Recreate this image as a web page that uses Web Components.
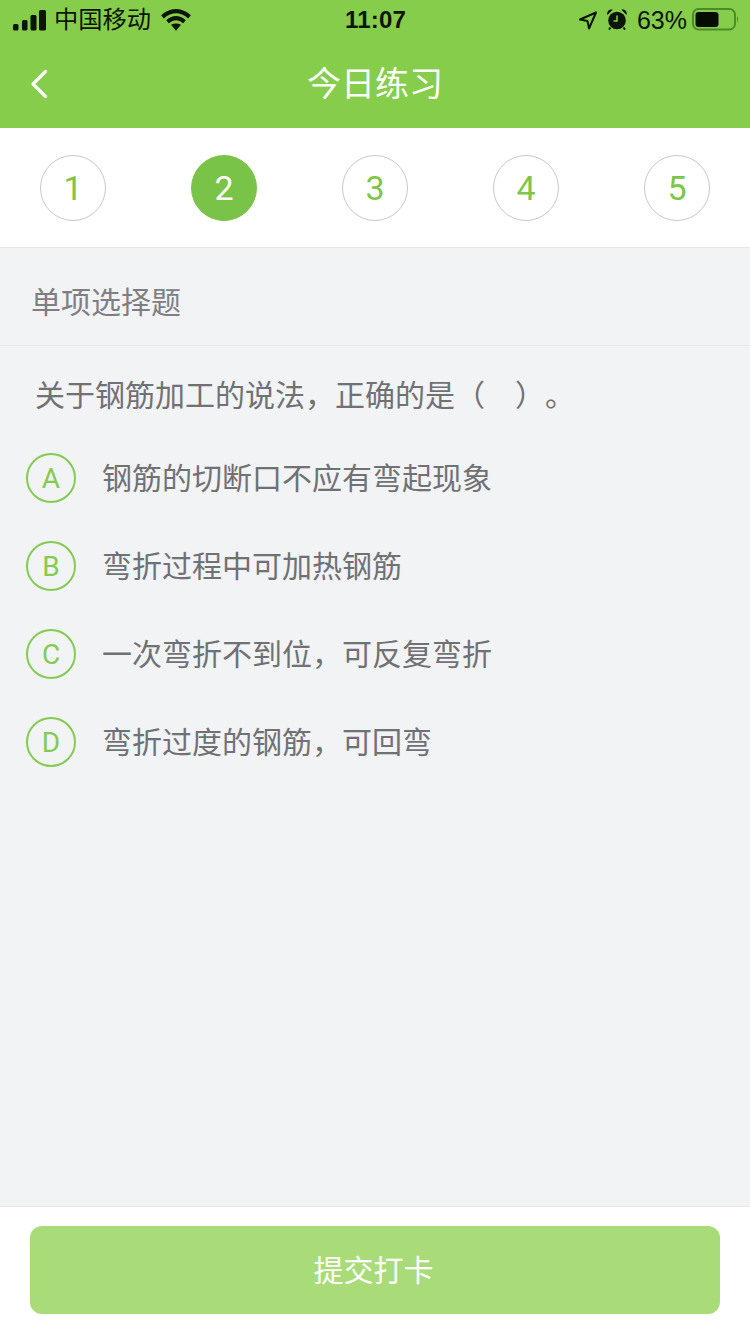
<!DOCTYPE html>
<html lang="zh">
<head>
<meta charset="utf-8">
<title>今日练习</title>
<style>
  html, body { margin: 0; height: 100%; }
  body {
    width: 750px;
    height: 1334px;
    overflow: hidden;
    background: #f2f3f5;
    font-family: "Liberation Sans", "Noto Sans CJK SC", sans-serif;
    display: flex;
    flex-direction: column;
  }
</style>
</head>
<body>
  <app-header title="今日练习"></app-header>
  <step-bar current="2" count="5"></step-bar>
  <section-title>单项选择题</section-title>
  <question-text>关于钢筋加工的说法，正确的是（　）。</question-text>
  <option-list>
    <option-row letter="A">钢筋的切断口不应有弯起现象</option-row>
    <option-row letter="B">弯折过程中可加热钢筋</option-row>
    <option-row letter="C">一次弯折不到位，可反复弯折</option-row>
    <option-row letter="D">弯折过度的钢筋，可回弯</option-row>
  </option-list>
  <submit-bar>提交打卡</submit-bar>

<script>
class AppHeader extends HTMLElement {
  constructor() {
    super();
    this.attachShadow({ mode: 'open' });
  }

  connectedCallback() {
    const title = this.getAttribute('title') || '';
    this.shadowRoot.innerHTML = `
      <style>
        :host { display: block; height: 128px; background: #86cd4b; flex: none; }
        .status {
          height: 40px;
          display: grid;
          grid-template-columns: 1fr auto 1fr;
          align-items: center;
          color: #0b1505;
          padding: 0 12px 0 13px;
        }
        .left, .right { display: flex; align-items: center; }
        .right { justify-content: flex-end; }
        .carrier { font-size: 24.25px; margin-left: 7px; line-height: 40px; }
        .wifi { margin-left: 10px; }
        .time { font-size: 24px; font-weight: 700; letter-spacing: 0.2px; }
        .pct { font-size: 25px; margin-left: 9px; margin-right: 5px; }
        .alarm { margin-left: 8px; margin-top: -3px; }
        .battery { margin-top: -2px; }
        .nav {
          height: 82px;
          padding-bottom: 6px;
          display: flex;
          align-items: center;
          justify-content: center;
          position: relative;
          color: #fff;
          font-size: 34px;
        }
        .back { position: absolute; left: 30px; top: 29px; }
      </style>
      <div class="status">
        <div class="left">
          <svg width="34" height="21" viewBox="0 0 34 21" fill="#0b1505">
            <rect x="0" y="14" width="5.500" height="6.500" rx="1.500"/>
            <rect x="9" y="10" width="5.500" height="10.500" rx="1.500"/>
            <rect x="17.500" y="5" width="6" height="15.500" rx="1.500"/>
            <rect x="26" y="0" width="7" height="20.500" rx="1.500"/>
          </svg>
          <span class="carrier">中国移动</span>
          <svg class="wifi" width="30" height="22" viewBox="0 0 30 22" fill="none" stroke="#0b1505">
            <path d="M1.500 7.800Q15-3.500 28.500 7.800" stroke-width="4.200"/>
            <path d="M6.500 12.800Q15 5.500 23.500 12.800" stroke-width="4"/>
            <path d="M10 15.800Q15 13 20 15.800L15 21.800z" fill="#0b1505" stroke="none"/>
          </svg>
        </div>
        <div class="time">11:07</div>
        <div class="right">
          <svg width="20" height="20" viewBox="0 0 20 20" fill="none" stroke="#0b1505" stroke-width="2" stroke-linejoin="round">
            <path d="M18 2.500 2 9.500l7.500 1.500 1.500 7.500z"/>
          </svg>
          <svg class="alarm" width="22" height="22" viewBox="0 0 22 22">
            <circle cx="11" cy="12.500" r="8.800" fill="#0b1505"/>
            <path d="M1.500 7C.3 3.500 3 .6 6.800 1.600zM20.500 7C21.700 3.500 19 .6 15.200 1.600z" fill="#0b1505"/>
            <path d="M4.500 19.500 3 21.500M17.500 19.500l1.500 2" stroke="#0b1505" stroke-width="2"/>
            <path d="M11 7.500v5.500H7.500" fill="none" stroke="#86cd4b" stroke-width="1.500"/>
          </svg>
          <span class="pct">63%</span>
          <svg class="battery" width="46" height="23" viewBox="0 0 46 23">
            <rect x="1" y="1" width="42" height="20.500" rx="5.500" fill="none" stroke="#4f8a28" stroke-width="2"/>
            <rect x="3.500" y="4" width="23" height="15" rx="3" fill="#060c02"/>
            <path d="M45 8c.7.600 1 1.800 1 3.200s-.3 2.600-1 3.200z" fill="#4f8a28"/>
          </svg>
        </div>
      </div>
      <div class="nav">
        <svg class="back" width="18" height="30" viewBox="0 0 18 30" fill="none" stroke="#fff" stroke-width="3.200" stroke-linecap="round" stroke-linejoin="round">
          <path d="M15.500 2.500 3 15l12.500 12.500"/>
        </svg>
        <span>${title}</span>
      </div>
    `;
  }
}

class StepBar extends HTMLElement {
  constructor() {
    super();
    this.attachShadow({ mode: 'open' });
  }

  connectedCallback() {
    const current = Number(this.getAttribute('current') || 1);
    const count = Number(this.getAttribute('count') || 5);
    let items = '';
    for (let i = 1; i <= count; i++) {
      items += `<div class="step ${i === current ? 'on' : ''}">${i}</div>`;
    }
    this.shadowRoot.innerHTML = `
      <style>
        :host {
          display: flex;
          flex: none;
          justify-content: space-between;
          align-items: center;
          height: 119px;
          padding: 0 40px;
          background: #fff;
          border-bottom: 1px solid #e6e6e6;
        }
        .step {
          width: 66px;
          height: 66px;
          box-sizing: border-box;
          border: 1px solid #c8c8c8;
          border-radius: 50%;
          display: flex;
          align-items: center;
          justify-content: center;
          color: #7ec64a;
          font-family: Roboto, "Liberation Sans", sans-serif;
          font-size: 34px;
        }
        .on { background: #7ac349; border-color: #7ac349; color: #fff; }
      </style>
      ${items}
    `;
  }
}

class SectionTitle extends HTMLElement {
  constructor() {
    super();
    this.attachShadow({ mode: 'open' });
    this.shadowRoot.innerHTML = `
      <style>
        :host {
          display: flex;
          flex: none;
          align-items: center;
          box-sizing: border-box;
          height: 98px;
          padding: 6px 0 0 31px;
          color: #7d7f82;
          font-size: 30px;
          border-bottom: 1px solid #e6e7e9;
        }
      </style>
      <slot></slot>
    `;
  }
}

class QuestionText extends HTMLElement {
  constructor() {
    super();
    this.attachShadow({ mode: 'open' });
    this.shadowRoot.innerHTML = `
      <style>
        :host {
          display: flex;
          flex: none;
          align-items: center;
          box-sizing: border-box;
          height: 98px;
          padding: 0 0 4px 35px;
          color: #6f7174;
          font-size: 30px;
          text-spacing-trim: space-all;
        }
      </style>
      <slot></slot>
    `;
  }
}

class OptionList extends HTMLElement {
  constructor() {
    super();
    this.attachShadow({ mode: 'open' });
    this.shadowRoot.innerHTML = `
      <style>
        :host {
          display: flex;
          flex: 1;
          flex-direction: column;
          gap: 38px;
          padding: 9px 0 0 26px;
        }
      </style>
      <slot></slot>
    `;
  }
}

class OptionRow extends HTMLElement {
  constructor() {
    super();
    this.attachShadow({ mode: 'open' });
  }

  connectedCallback() {
    const letter = this.getAttribute('letter') || '';
    this.shadowRoot.innerHTML = `
      <style>
        :host {
          display: flex;
          align-items: center;
          height: 50px;
          gap: 26px;
          color: #6f7174;
          font-size: 30px;
          text-spacing-trim: space-all;
        }
        .letter {
          width: 50px;
          height: 50px;
          flex: none;
          box-sizing: border-box;
          border: 2px solid #84cb52;
          border-radius: 50%;
          display: flex;
          align-items: center;
          justify-content: center;
          color: #84cb52;
          font-family: Roboto, "Liberation Sans", sans-serif;
          font-size: 28px;
        }
        .text { position: relative; top: -2px; }
      </style>
      <div class="letter">${letter}</div>
      <div class="text"><slot></slot></div>
    `;
  }
}

class SubmitBar extends HTMLElement {
  constructor() {
    super();
    this.attachShadow({ mode: 'open' });
    this.shadowRoot.innerHTML = `
      <style>
        :host {
          display: block;
          flex: none;
          box-sizing: border-box;
          height: 128px;
          padding: 19px 30px 0;
          background: #fff;
          border-top: 1px solid #e8e8ea;
        }
        .btn {
          box-sizing: border-box;
          height: 88px;
          padding: 0 3px 4px 0;
          border-radius: 12px;
          background: #a9dc79;
          color: #fff;
          font-size: 30px;
          display: flex;
          align-items: center;
          justify-content: center;
        }
      </style>
      <div class="btn"><slot></slot></div>
    `;
  }
}

customElements.define('app-header', AppHeader);
customElements.define('step-bar', StepBar);
customElements.define('section-title', SectionTitle);
customElements.define('question-text', QuestionText);
customElements.define('option-list', OptionList);
customElements.define('option-row', OptionRow);
customElements.define('submit-bar', SubmitBar);
</script>
</body>
</html>
